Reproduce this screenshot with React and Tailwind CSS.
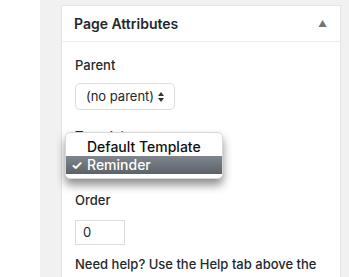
import React from 'react';

const App = () => {
  return (
    <div className='w-[349px] h-[277px] overflow-hidden bg-white flex' style={{ fontFamily: 'Inter, "Noto Sans", sans-serif' }}>
      <div className='w-[40px] shrink-0 bg-white' />
      <div className='flex-1 bg-[#f1f1f1] pt-[5px] pl-[21px] pr-[8px]'>
        <div className='relative bg-white border border-[#e5e5e5] shadow-[0_1px_1px_rgba(0,0,0,0.04)] h-[300px]'>
          {/* header */}
          <div className='h-[36px] border-b border-[#eeeeee] flex items-center justify-between pl-[12px] pr-[13px]'>
            <h2 className='text-[14px] font-semibold text-[#23282d] leading-none'>Page Attributes</h2>
            <span className='text-[9px] text-[#72777c] leading-none'>▲</span>
          </div>

          <div className='pl-[13px] pt-[14px] text-[13px] text-[#23282d]'>
            <p className='leading-[18px] font-medium'>Parent</p>
            <div className='mt-[9px] w-[100px] h-[27px] border border-[#dddddd] rounded-[5px] flex items-center justify-center gap-[4px] text-[13px]'>
              <span>(no parent)</span>
              <svg width='6' height='10' viewBox='0 0 6 10'>
                <path d='M3 0 L6 4 H0 Z' fill='#333' />
                <path d='M3 10 L6 6 H0 Z' fill='#333' />
              </svg>
            </div>

            <p className='mt-[17px] leading-[18px] font-medium'>Template</p>
            <div className='h-[46px]' />

            <p className='leading-[18px] font-medium'>Order</p>
            <div className='mt-[11px] w-[50px] h-[25px] border border-[#dddddd] flex items-center pl-[7px]'>0</div>
            <p className='mt-[10px] leading-[18px] font-medium whitespace-nowrap'>Need help? Use the Help tab above the</p>
          </div>

          {/* open select menu */}
          <div className='absolute left-[3px] top-[126px] w-[158px] bg-white rounded-[5px] border border-[#d8d8d8] shadow-[0_6px_10px_rgba(0,0,0,0.45)] pt-[4px] pb-[4px] text-[14px] text-[#111] font-medium'>
            <div className='h-[19px] flex items-center pl-[21px] leading-none'>Default Template</div>
            <div className='h-[18px] flex items-center bg-gradient-to-b from-[#80868d] to-[#5c6269] text-white leading-none'>
              <span className='w-[21px] pl-[5px] text-[13px] font-bold'>✓</span>
              <span>Reminder</span>
            </div>
          </div>
        </div>
      </div>
    </div>
  );
};

export default App;
